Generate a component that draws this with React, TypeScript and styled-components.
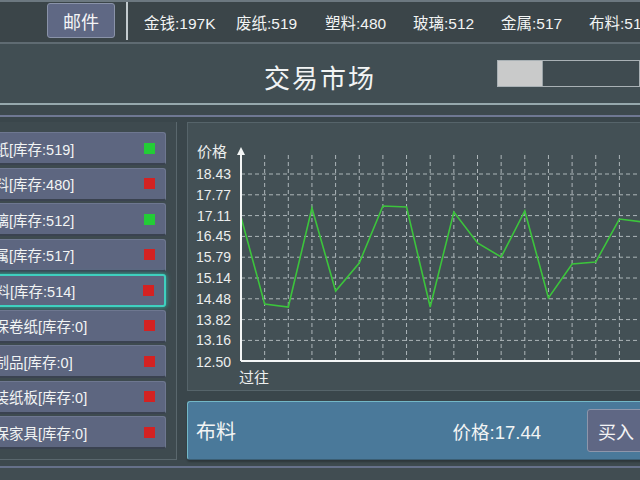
import styled, { createGlobalStyle } from "styled-components";

const GlobalStyle = createGlobalStyle`
  html, body {
    margin: 0;
    padding: 0;
    background: #3c474b;
  }
`;

const Screen = styled.div`
  width: 640px;
  height: 480px;
  overflow: hidden;
  background: #3d494e;
  color: #f2f4f4;
  font-family: "Liberation Sans", "Noto Sans CJK SC", sans-serif;
  display: flex;
  flex-direction: column;
`;

const TopBar = styled.div`
  height: 40px;
  flex-shrink: 0;
  display: flex;
  align-items: flex-start;
  background: #3b4549;
  border-top: 2px solid #6c7880;
  border-bottom: 2px solid #5f6b72;
`;

const MailButton = styled.button`
  flex-shrink: 0;
  margin: 1px 0 0 47px;
  width: 68px;
  height: 35px;
  background: #5f6884;
  border: 1px solid #8a93a9;
  border-radius: 3px;
  color: #f4f4f6;
  font-family: inherit;
  font-size: 18px;
  padding: 0;
`;

const VDivider = styled.div`
  flex-shrink: 0;
  width: 2px;
  height: 38px;
  margin-left: 11px;
  background: #c3cbcf;
`;

const Stats = styled.div`
  display: flex;
  flex-shrink: 0;
  margin-left: 16px;
  height: 40px;
  align-items: center;
`;

const Stat = styled.span<{ $w: number }>`
  width: ${(p) => p.$w}px;
  flex-shrink: 0;
  font-size: 15.5px;
  white-space: nowrap;
`;

const Header = styled.div`
  height: 59px;
  flex-shrink: 0;
  display: grid;
  grid-template-columns: 1fr auto 1fr;
  align-items: center;
  background: #414e53;
  border-bottom: 2px solid #96a8ad;
`;

const Title = styled.h1`
  grid-column: 2;
  margin: 6px 0 0;
  font-size: 26px;
  font-weight: normal;
  letter-spacing: 2px;
`;

const Progress = styled.div`
  grid-column: 3;
  justify-self: end;
  width: 141px;
  height: 25px;
  border: 1px solid #a9b1b5;
  background: #3f4b50;
`;

const ProgressFill = styled.div`
  height: 100%;
  background: #c9caca;
  border-right: 1px solid #9aa3a7;
`;

const Body = styled.div`
  margin-top: 10px;
  border-top: 2px solid #6f7893;
  padding-top: 5px;
  height: 338px;
  display: flex;
  gap: 10px;
  background: #3a464b;
`;

const LeftPanel = styled.div`
  width: 176px;
  flex-shrink: 0;
  background: #3e4a4f;
  border-right: 1px solid #5a676d;
  border-bottom: 1px solid #5a676d;
  padding-top: 10px;
  display: flex;
  flex-direction: column;
  gap: 2.5px;
`;

const Item = styled.div<{ $active?: boolean }>`
  height: 33px;
  box-sizing: border-box;
  margin: 0 10px 0 -30px;
  padding: 0 10px 0 9px;
  display: flex;
  align-items: center;
  justify-content: space-between;
  background: #5d6680;
  border-radius: 3px;
  border: ${(p) => (p.$active ? "2px solid #3fd0bf" : "1px solid #6e7790")};
  border-bottom: ${(p) => (p.$active ? "2px solid #3fd0bf" : "2px solid #3a4250")};
  box-shadow: ${(p) => (p.$active ? "0 0 5px #2fb8a8" : "none")};
  font-size: 14.5px;
  white-space: nowrap;
`;

const Mark = styled.span<{ $ok: boolean }>`
  width: 11px;
  height: 11px;
  flex-shrink: 0;
  background: ${(p) => (p.$ok ? "#23cc36" : "#d42222")};
`;

const RightColumn = styled.div`
  width: 470px;
  flex-shrink: 0;
  display: flex;
  flex-direction: column;
  gap: 10px;
`;

const ChartPanel = styled.div`
  height: 267px;
  background: #435055;
  border: 1px solid #56646a;
  border-right: none;
`;

const InfoPanel = styled.div`
  height: 57px;
  display: flex;
  align-items: center;
  background: #4a799a;
  border: 1px solid #73b7c6;
  border-right: none;
  border-bottom: 1px solid #3b5e74;
  border-radius: 3px 0 0 3px;
  box-shadow: 0 2px 2px rgba(0, 0, 0, 0.25);
`;

const Goods = styled.span`
  flex: 1;
  padding-left: 8px;
  font-size: 20px;
`;

const Price = styled.span`
  font-size: 18.5px;
`;

const BuyButton = styled.button`
  margin: 0 10px 0 46px;
  width: 60px;
  height: 43px;
  background: #5f6784;
  border: 1px solid #8e96ab;
  border-radius: 3px;
  color: #f4f4f6;
  font-family: inherit;
  font-size: 18px;
  padding: 0 0 0 10px;
  text-align: left;
`;

const Footer = styled.div`
  flex: 1;
  margin-top: 6px;
  border-top: 2px solid #66718a;
  background: #414d52;
`;

const stats = [
  { label: "金钱:197K", w: 92 },
  { label: "废纸:519", w: 89 },
  { label: "塑料:480", w: 88 },
  { label: "玻璃:512", w: 88 },
  { label: "金属:517", w: 88 },
  { label: "布料:514", w: 88 },
];

const items = [
  { name: "废纸", stock: 519, ok: true },
  { name: "塑料", stock: 480, ok: false },
  { name: "玻璃", stock: 512, ok: true },
  { name: "金属", stock: 517, ok: false },
  { name: "布料", stock: 514, ok: false, active: true },
  { name: "环保卷纸", stock: 0, ok: false },
  { name: "木制品", stock: 0, ok: false },
  { name: "包装纸板", stock: 0, ok: false },
  { name: "环保家具", stock: 0, ok: false },
];

const yLabels = ["18.43", "17.77", "17.11", "16.45", "15.79", "15.14", "14.48", "13.82", "13.16"];

// price history, y in page pixels
const history = [217, 304, 307, 208, 291, 263, 206, 207, 307, 212, 243, 257, 211, 298, 264, 262, 219, 222];

const AXIS_X = 241;
const AXIS_Y = 361;
const STEP_X = 23.65;
const STEP_Y = 20.8;

const PriceChart = () => {
  const points = history.map((y, i) => `${AXIS_X + i * STEP_X},${y}`).join(" ");
  return (
    <svg width="469" height="267" viewBox="188 123 469 267" style={{ display: "block" }}>
      <g stroke="#c9d0d3" strokeWidth="1" strokeDasharray="4 3" opacity="0.8">
        {yLabels.map((_, i) => {
          const y = 174 + i * STEP_Y;
          return <line key={`h${i}`} x1={AXIS_X} y1={y} x2={657} y2={y} />;
        })}
        {Array.from({ length: 17 }, (_, k) => {
          const x = AXIS_X + (k + 1) * STEP_X;
          return <line key={`v${k}`} x1={x} y1={155} x2={x} y2={AXIS_Y} />;
        })}
      </g>
      <polyline points={points} fill="none" stroke="#3cc43c" strokeWidth="1.6" />
      <g stroke="#f4f6f6" strokeWidth="2" fill="none">
        <line x1={AXIS_X} y1={152} x2={AXIS_X} y2={AXIS_Y} />
        <line x1={AXIS_X} y1={AXIS_Y} x2={657} y2={AXIS_Y} />
      </g>
      <polygon points={`${AXIS_X},147 ${AXIS_X - 4},155 ${AXIS_X + 4},155`} fill="#f4f6f6" />
      <g fill="#eceeee" fontFamily='"Liberation Sans", "Noto Sans CJK SC", sans-serif' fontSize="14">
        {yLabels.map((t, i) => (
          <text key={t} x={231} y={174 + i * STEP_Y + 5} textAnchor="end">
            {t}
          </text>
        ))}
        <text x={231} y={AXIS_Y + 6} textAnchor="end">
          12.50
        </text>
        <text x={197} y={157} fontSize="15">
          价格
        </text>
        <text x={239} y={383} fontSize="15">
          过往
        </text>
      </g>
    </svg>
  );
};

const App = () => {
  const loaded = 31;
  return (
    <>
      <GlobalStyle />
      <Screen>
        <TopBar>
          <MailButton>邮件</MailButton>
          <VDivider />
          <Stats>
            {stats.map((s) => (
              <Stat key={s.label} $w={s.w}>
                {s.label}
              </Stat>
            ))}
          </Stats>
        </TopBar>
        <Header>
          <Title>交易市场</Title>
          <Progress>
            <ProgressFill style={{ width: `${loaded}%` }} />
          </Progress>
        </Header>
        <Body>
          <LeftPanel>
            {items.map((it) => (
              <Item key={it.name} $active={it.active}>
                <span>
                  {it.name}[库存:{it.stock}]
                </span>
                <Mark $ok={it.ok} />
              </Item>
            ))}
          </LeftPanel>
          <RightColumn>
            <ChartPanel>
              <PriceChart />
            </ChartPanel>
            <InfoPanel>
              <Goods>布料</Goods>
              <Price>价格:17.44</Price>
              <BuyButton>买入</BuyButton>
            </InfoPanel>
          </RightColumn>
        </Body>
        <Footer />
      </Screen>
    </>
  );
};

export default App;
